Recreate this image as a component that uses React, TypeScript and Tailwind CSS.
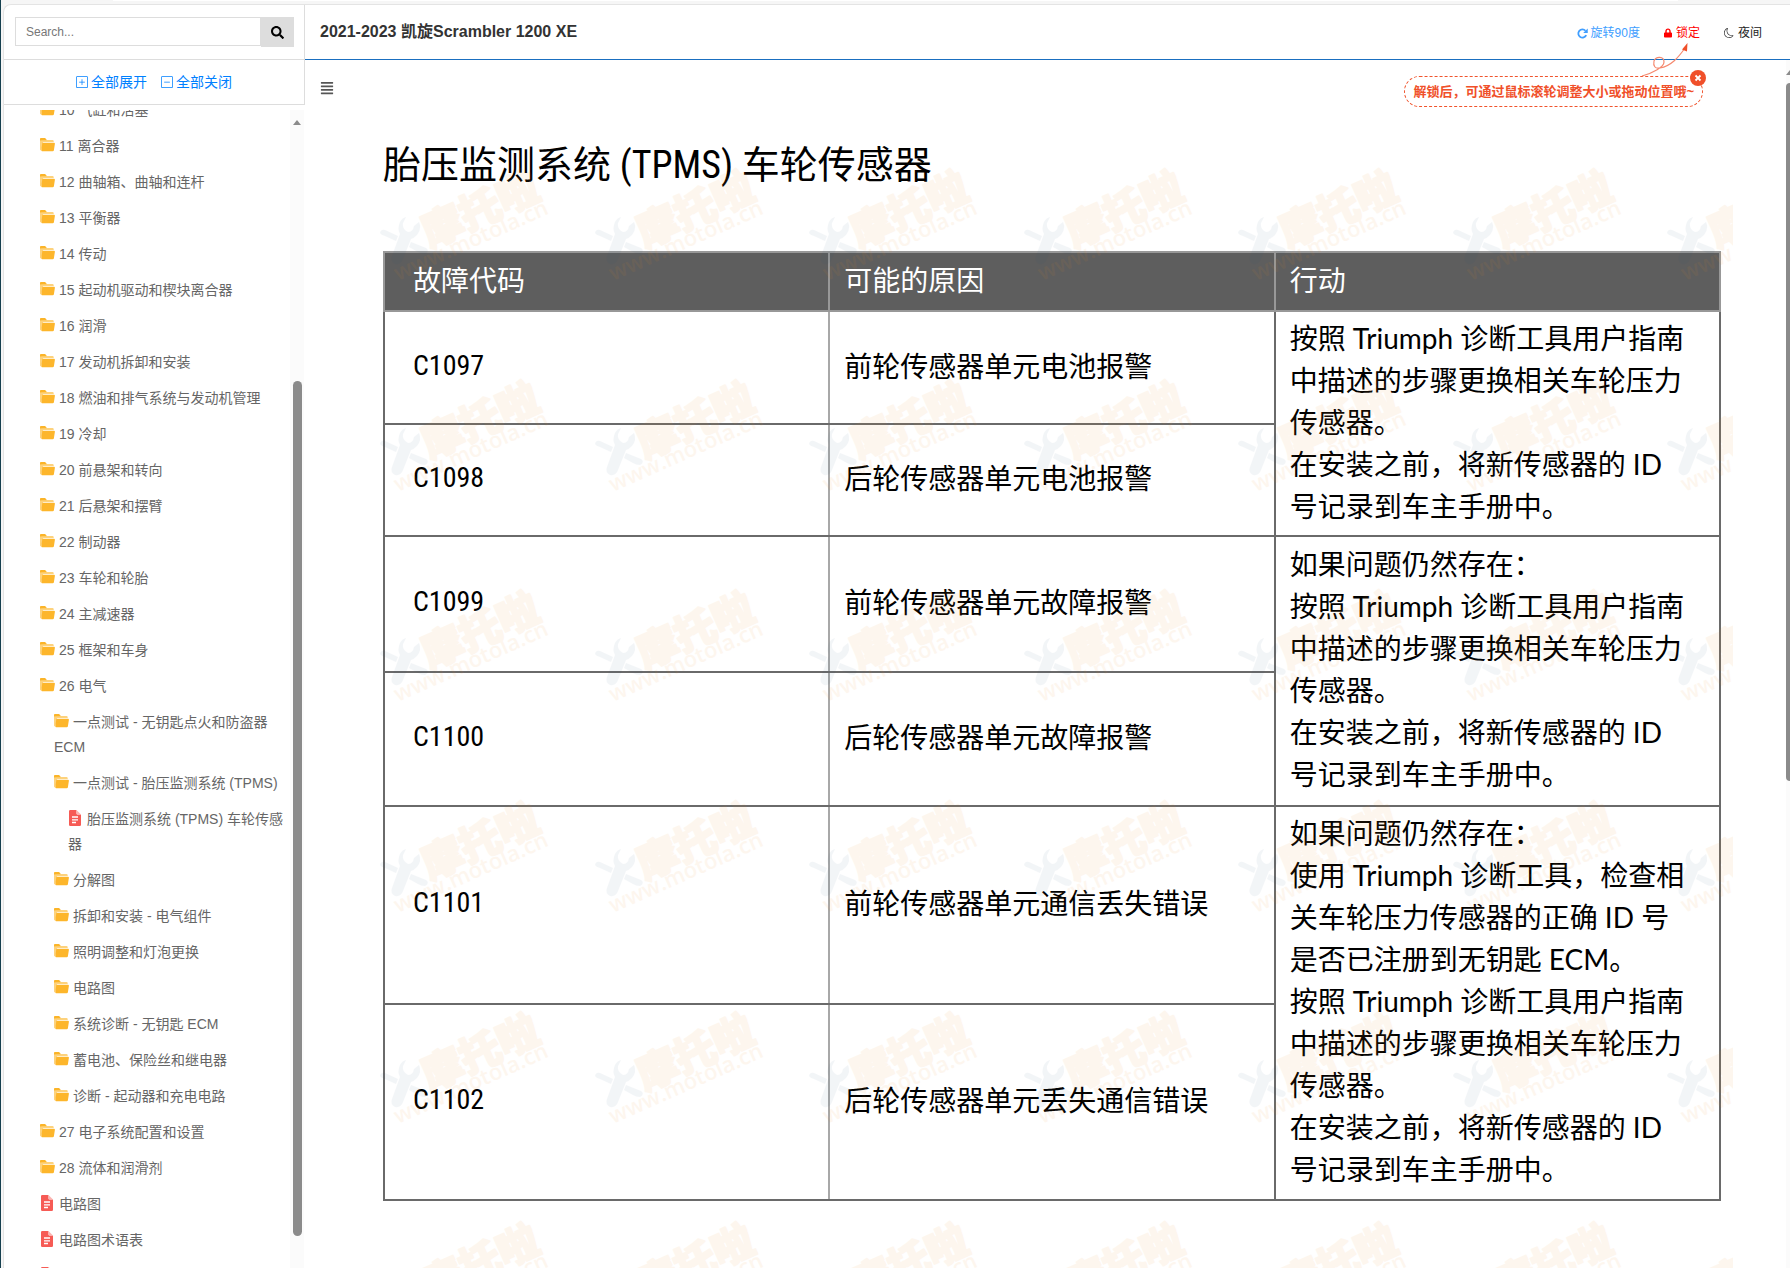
import { useState } from 'react';
import { FaAlignJustify, FaLock, FaSearch } from 'react-icons/fa';
import { BsDashSquare, BsMoon, BsPlusSquare } from 'react-icons/bs';
import { clsx } from 'clsx';

type Nodo = { label: string; level: 1 | 2 | 3; kind: 'folder' | 'file' };

const folder = (label: string, level: 1 | 2 | 3 = 1): Nodo => ({ label, level, kind: 'folder' });
const file = (label: string, level: 1 | 2 | 3 = 1): Nodo => ({ label, level, kind: 'file' });

const tree: Nodo[] = [
  folder('10 气缸和活塞'),
  folder('11 离合器'),
  folder('12 曲轴箱、曲轴和连杆'),
  folder('13 平衡器'),
  folder('14 传动'),
  folder('15 起动机驱动和楔块离合器'),
  folder('16 润滑'),
  folder('17 发动机拆卸和安装'),
  folder('18 燃油和排气系统与发动机管理'),
  folder('19 冷却'),
  folder('20 前悬架和转向'),
  folder('21 后悬架和摆臂'),
  folder('22 制动器'),
  folder('23 车轮和轮胎'),
  folder('24 主减速器'),
  folder('25 框架和车身'),
  folder('26 电气'),
  folder('一点测试 - 无钥匙点火和防盗器 ECM', 2),
  folder('一点测试 - 胎压监测系统 (TPMS)', 2),
  file('胎压监测系统 (TPMS) 车轮传感器', 3),
  folder('分解图', 2),
  folder('拆卸和安装 - 电气组件', 2),
  folder('照明调整和灯泡更换', 2),
  folder('电路图', 2),
  folder('系统诊断 - 无钥匙 ECM', 2),
  folder('蓄电池、保险丝和继电器', 2),
  folder('诊断 - 起动器和充电电路', 2),
  folder('27 电子系统配置和设置'),
  folder('28 流体和润滑剂'),
  file('电路图'),
  file('电路图术语表'),
  file(''),
];

const indent = { 1: 'pl-9', 2: 'pl-[50px]', 3: 'pl-16' };

const replaceSteps = ['按照 Triumph 诊断工具用户指南', '中描述的步骤更换相关车轮压力', '传感器。'];
const recordSteps = ['在安装之前，将新传感器的 ID', '号记录到车主手册中。'];

const rows = [
  { code: 'C1097', cause: '前轮传感器单元电池报警', height: 'h-[113px]', action: [...replaceSteps, ...recordSteps] },
  { code: 'C1098', cause: '后轮传感器单元电池报警', height: 'h-28' },
  {
    code: 'C1099',
    cause: '前轮传感器单元故障报警',
    height: 'h-[136px]',
    action: ['如果问题仍然存在：', ...replaceSteps, ...recordSteps],
  },
  { code: 'C1100', cause: '后轮传感器单元故障报警', height: 'h-[134px]' },
  {
    code: 'C1101',
    cause: '前轮传感器单元通信丢失错误',
    height: 'h-[198px]',
    action: [
      '如果问题仍然存在：',
      '使用 Triumph 诊断工具，检查相',
      '关车轮压力传感器的正确 ID 号',
      '是否已注册到无钥匙 ECM。',
      ...replaceSteps,
      ...recordSteps,
    ],
  },
  { code: 'C1102', cause: '后轮传感器单元丢失通信错误', height: 'h-[196px]' },
];

const FolderIcon = () => (
  <svg viewBox="0 0 16 14" className="inline-block w-4 h-3.5 mr-[3px] -mt-1">
    <path d="M0 1.2Q0 0 1.2 0H5l2 2h5.5q1.2 0 1.2 1.2V4H3.2L1.4 12.5Q0 12.5 0 11.5z" fill="#fdd27c" />
    <path d="M0 2.5V1.2Q0 0 1.2 0H5l1.6 2.2H3z" fill="#fbb428" />
    <path d="M3 4.8h11q1 0 .9 1l-1 6.5q-.2 1-1.2 1H2.2q-1 0-.8-1L2.2 5.6q.1-.8.8-.8z" fill="#fdb62b" />
  </svg>
);

const FileIcon = () => (
  <svg viewBox="0 0 12 16" className="inline-block w-3 h-4 ml-px mr-1.5 -mt-1">
    <path d="M0 1.2Q0 0 1.2 0H7.5v3.5q0 1 1 1H12V14.8Q12 16 10.8 16H1.2Q0 16 0 14.8z" fill="#f65b55" />
    <path d="M7.5 0L12 4.5H8.5q-1 0-1-1z" fill="#fbb5b2" />
    <path d="M3 7h6M3 9.8h6M3 12.5h4" stroke="#fff" strokeWidth="1.3" />
  </svg>
);

const RotateIcon = () => (
  <svg viewBox="0 0 16 16" className="w-[11px] h-[11px]" fill="none">
    <path d="M13.4 10.4A6 6 0 1 1 12.4 4" stroke="currentColor" strokeWidth="2.6" />
    <path d="M15.6.6v6.6H9z" fill="currentColor" />
  </svg>
);

const markX = [25, 240, 454, 669, 883, 1098, 1312];
const markY = [107, 318, 528, 739, 950, 1160];

const Watermark = () => (
  <svg className="absolute inset-0 w-full h-full pointer-events-none" aria-hidden="true">
    <defs>
      <g id="stamp">
        <g fill="#23527c" opacity="0.05">
          <path d="M26 0L23 6Q22 12 28 15Q33 15 34 9L39 5Q42 12 37 18Q34 21 31 22L23 42Q21 48 15 47Q10 44 12 39L20 17Q17 12 20 5Q22 1 26 0z" />
          <path d="M0 16Q1 12 5 13L18 19L16 24L5 19Q1 18 0 16zM31 25L46 31Q50 34 45 37Q41 37 38 35L29 30z" />
        </g>
        <g fill="#f08a24" opacity="0.07" className="font-['Noto_Sans_CJK_SC',sans-serif]">
          <text
            transform="translate(50 31) rotate(-24)"
            fontSize="41"
            fontWeight="900"
            stroke="#f08a24"
            strokeWidth="2"
            strokeLinejoin="round"
          >
            摩托啦
          </text>
          <text transform="translate(18 64) rotate(-24)" fontSize="22" className="font-['Open_Sans',sans-serif] font-semibold">
            www.motola.cn
          </text>
        </g>
      </g>
    </defs>
    {markY.map((y) => markX.map((x) => <use key={`${x}-${y}`} href="#stamp" x={x} y={y} />))}
  </svg>
);

const LockHint = ({ onClose }: { onClose: () => void }) => (
  <div className="absolute right-[87px] top-[71px] z-10">
    <div className="h-[31px] px-2 flex items-center rounded-full border border-dashed border-[#f0542d] text-[13px] font-bold text-[#f0502a] whitespace-nowrap">
      解锁后，可通过鼠标滚轮调整大小或拖动位置哦~
    </div>
    <button
      onClick={onClose}
      aria-label="关闭"
      className="absolute -right-[3px] -top-1.5 w-4 h-4 flex items-center justify-center rounded-full bg-[#f0502a]"
    >
      <svg viewBox="0 0 8 8" className="w-2 h-2">
        <path d="M1.5 1.5l5 5M6.5 1.5l-5 5" stroke="#fff" strokeWidth="1.8" />
      </svg>
    </button>
    <svg viewBox="0 0 48 34" className="absolute right-[14px] bottom-[30px] w-12 h-[34px]" fill="none">
      <path d="M1 33C12 30 23 24 23 19C23 13 15 13 13 18C12 23 14 26 19 25C30 23 37 15 44 5" stroke="#f58a70" strokeWidth="1.2" />
      <path d="M46.5 0L41 6.5L46 8.5z" fill="#f0502a" />
    </svg>
  </div>
);

export default function App() {
  const [hint, setHint] = useState(true);

  return (
    <div className="h-screen flex flex-col overflow-hidden border-l border-[#16404f] bg-[#f6f6f6] font-['Liberation_Sans','Noto_Sans_CJK_SC',sans-serif]">
      <div className="h-px mx-28 shrink-0 bg-white" />
      <div className="relative flex-1 min-h-0 mt-[3px] ml-0.5 flex rounded-tl-lg border-l border-t border-[#e4e4e4] bg-white">
        <aside className="w-[301px] shrink-0 flex flex-col">
          <div className="h-[55px] pl-[11px] pr-2.5 pt-3 border-b border-r border-[#ddd] flex items-start">
            <input
              type="text"
              placeholder="Search..."
              aria-label="Search"
              className="flex-1 min-w-0 h-[29px] px-2.5 border border-[#ddd] text-xs text-[#333] placeholder:text-[#777] outline-none"
            />
            <button aria-label="搜索" className="w-[33px] h-[30px] flex items-center justify-center bg-[#ddd] text-black">
              <FaSearch className="w-[13px] h-[13px]" />
            </button>
          </div>
          <div className="h-[45px] flex items-center justify-center gap-3.5 border-b border-r border-[#ddd] text-sm text-[#0080ff]">
            <button className="flex items-center gap-[3px]">
              <BsPlusSquare className="w-3 h-3" />
              全部展开
            </button>
            <button className="flex items-center gap-[3px]">
              <BsDashSquare className="w-3 h-3" />
              全部关闭
            </button>
          </div>

          <div className="flex-1 min-h-0 mt-[5px] mr-px flex">
            <nav className="flex-1 min-w-0 overflow-hidden">
              {/* la lista está desplazada media fila */}
              <ul className="-mt-[18px] text-sm text-[#666]">
                {tree.map((n, i) => (
                  <li key={i} className={clsx('pt-1.5 pb-[5px] leading-[25px]', indent[n.level])}>
                    <a href="#" className="block">
                      {n.kind === 'folder' ? <FolderIcon /> : <FileIcon />}
                      {n.label}
                    </a>
                  </li>
                ))}
              </ul>
            </nav>
            <div className="w-[14px] flex flex-col items-center bg-[#fbfbfb]">
              <div className="mt-2.5 border-x-4 border-b-[5px] border-x-transparent border-b-[#8b8b8b]" />
              <div className="mt-64 w-[9px] h-[855px] shrink-0 rounded-full bg-[#8b8b8b]" />
            </div>
          </div>
        </aside>

        <main className="flex-1 min-w-0 flex flex-col">
          <header className="h-[55px] shrink-0 pl-[15px] pr-7 flex items-center justify-between border-b border-[#1a6fc0]">
            <h1 className="text-base font-bold text-[#333]">2021-2023 凯旋Scrambler 1200 XE</h1>
            <div className="flex items-center gap-6 text-xs pt-0.5">
              <button className="flex items-center gap-[3px] text-[#409eff]">
                <RotateIcon />
                旋转90度
              </button>
              <button className="flex items-center gap-1 text-[#f00]">
                <FaLock className="w-2 h-2.5" />
                锁定
              </button>
              <button className="flex items-center gap-1 text-[#222]">
                <BsMoon className="w-2.5 h-2.5" />
                夜间
              </button>
            </div>
          </header>

          <div className="flex-1 min-h-0 flex">
            <div className="flex-1 min-w-0 overflow-hidden">
              <div className="h-[50px] pl-[15px] pt-1.5 flex items-center">
                <button aria-label="目录" className="text-[#555]">
                  <FaAlignJustify className="w-3.5 h-3.5" />
                </button>
              </div>

              <article className="relative h-[1220px] ml-[50px] mr-[53px] pl-7 pr-3 pt-[25px] overflow-hidden text-black font-['Lato','Noto_Sans_CJK_SC',sans-serif]">
                <h2 className="h-[116px] text-[38px] leading-[60px] font-['Roboto_Condensed','Noto_Sans_CJK_SC',sans-serif]">
                  胎压监测系统 (TPMS) 车轮传感器
                </h2>
                <table className="w-full table-fixed border-collapse border-2 border-[#6a6a6a] text-[28px] leading-[42px]">
                  <thead>
                    <tr className="h-[59px] bg-[#5e5e5e] text-white text-left">
                      <th className="pl-7 pb-1 font-normal border-2 border-[#989898]">故障代码</th>
                      <th className="pl-3.5 pb-1 font-normal border-2 border-[#989898]">可能的原因</th>
                      <th className="pl-3.5 pb-1 font-normal border-2 border-[#989898]">行动</th>
                    </tr>
                  </thead>
                  <tbody>
                    {rows.map((r) => (
                      <tr key={r.code} className={r.height}>
                        <td className="pl-7 pb-1 border-2 border-[#6a6a6a] border-r-[#a8a8a8] font-['Roboto_Condensed','Noto_Sans_CJK_SC',sans-serif]">
                          {r.code}
                        </td>
                        <td className="pl-3.5 pb-1 border-2 border-[#6a6a6a] border-l-[#a8a8a8]">{r.cause}</td>
                        {r.action && (
                          <td rowSpan={2} className="pl-3.5 pb-1 border-2 border-[#6a6a6a] whitespace-nowrap">
                            {r.action.map((line) => (
                              <p key={line}>{line}</p>
                            ))}
                          </td>
                        )}
                      </tr>
                    ))}
                  </tbody>
                </table>
                <Watermark />
              </article>
            </div>
            <div className="w-1 overflow-hidden flex flex-col bg-[#fbfbfb]">
              <div className="mt-2.5 w-2 border-x-4 border-b-[5px] border-x-transparent border-b-[#8b8b8b]" />
              <div className="mt-2 w-2 h-[698px] shrink-0 rounded-full bg-[#8b8b8b]" />
            </div>
          </div>
        </main>

        {hint && <LockHint onClose={() => setHint(false)} />}
      </div>
    </div>
  );
}
